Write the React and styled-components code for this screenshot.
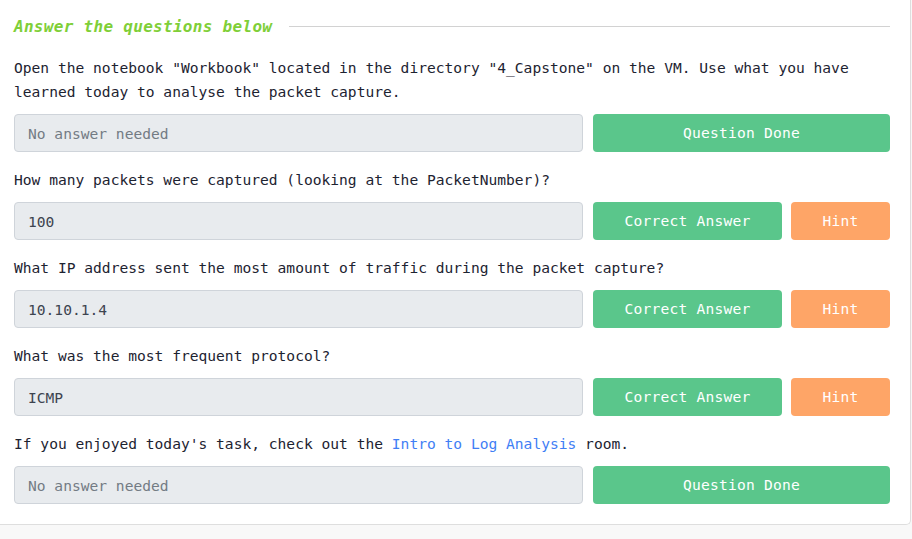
import React from "react";
import styled, { createGlobalStyle } from "styled-components";

const Global = createGlobalStyle`
  html, body { margin: 0; padding: 0; background: #f8f8f8; }
  body { font-family: "DejaVu Sans Mono", "Liberation Mono", monospace; }
`;

const Card = styled.div`
  box-sizing: border-box;
  width: 911px;
  background: #ffffff;
  border-right: 1px solid #dedede;
  border-bottom: 1px solid #dedede;
  border-bottom-right-radius: 5px;
  padding: 14px 20px 20px 14px;
  display: flex;
  flex-direction: column;
`;

const TitleRow = styled.div`
  display: flex;
  align-items: center;
  gap: 17px;
  height: 24px;
  margin-bottom: 18px;
`;

const Title = styled.h3`
  margin: 0;
  font-size: 16px;
  font-weight: bold;
  font-style: italic;
  letter-spacing: 0.3px;
  color: #7fcf38;
  white-space: nowrap;
`;

const Rule = styled.div`
  flex: 1;
  height: 1px;
  background: #d2d2d2;
`;

const Question = styled.div`
  display: flex;
  flex-direction: column;
  & + & { margin-top: 16px; }
`;

const Text = styled.p`
  margin: 0 0 10px;
  font-size: 14.6px;
  line-height: 24px;
  color: #1d2331;
`;

const Link = styled.a`
  color: #3f7ef5;
  text-decoration: none;
`;

const Row = styled.div`
  display: flex;
  gap: 10px;
  height: 38px;
`;

const Field = styled.div`
  flex: 1;
  box-sizing: border-box;
  display: flex;
  align-items: center;
  padding: 0 13px;
  background: #e8ebee;
  border: 1px solid #cfd4da;
  border-radius: 4px;
  font-size: 14.6px;
  color: ${(p) => (p.$placeholder ? "#737b84" : "#3d4450")};
`;

const Buttons = styled.div`
  width: 297px;
  display: flex;
  gap: 9px;
`;

const Button = styled.div`
  box-sizing: border-box;
  flex: ${(p) => (p.$hint ? "0 0 99px" : "1")};
  display: flex;
  align-items: center;
  justify-content: center;
  padding-bottom: 1px;
  border-radius: 4px;
  background: ${(p) => (p.$hint ? "#fea567" : "#5ac68b")};
  color: #ffffff;
  font-size: 14.6px;
  letter-spacing: 0.2px;
`;

const questions = [
  {
    text: (
      <>
        Open the notebook "Workbook" located in the directory "4_Capstone" on the VM. Use what you have
        learned today to analyse the packet capture.
      </>
    ),
    answer: "No answer needed",
    placeholder: true,
    done: true,
  },
  {
    text: "How many packets were captured (looking at the PacketNumber)?",
    answer: "100",
  },
  {
    text: "What IP address sent the most amount of traffic during the packet capture?",
    answer: "10.10.1.4",
  },
  {
    text: "What was the most frequent protocol?",
    answer: "ICMP",
  },
  {
    text: (
      <>
        If you enjoyed today's task, check out the <Link href="#">Intro to Log Analysis</Link> room.
      </>
    ),
    answer: "No answer needed",
    placeholder: true,
    done: true,
  },
];

export default function App() {
  return (
    <>
      <Global />
      <Card>
        <TitleRow>
          <Title>Answer the questions below</Title>
          <Rule />
        </TitleRow>
        {questions.map((q, i) => (
          <Question key={i}>
            <Text>{q.text}</Text>
            <Row>
              <Field $placeholder={q.placeholder}>{q.answer}</Field>
              <Buttons>
                {q.done ? (
                  <Button>Question Done</Button>
                ) : (
                  <>
                    <Button>Correct Answer</Button>
                    <Button $hint>Hint</Button>
                  </>
                )}
              </Buttons>
            </Row>
          </Question>
        ))}
      </Card>
    </>
  );
}
